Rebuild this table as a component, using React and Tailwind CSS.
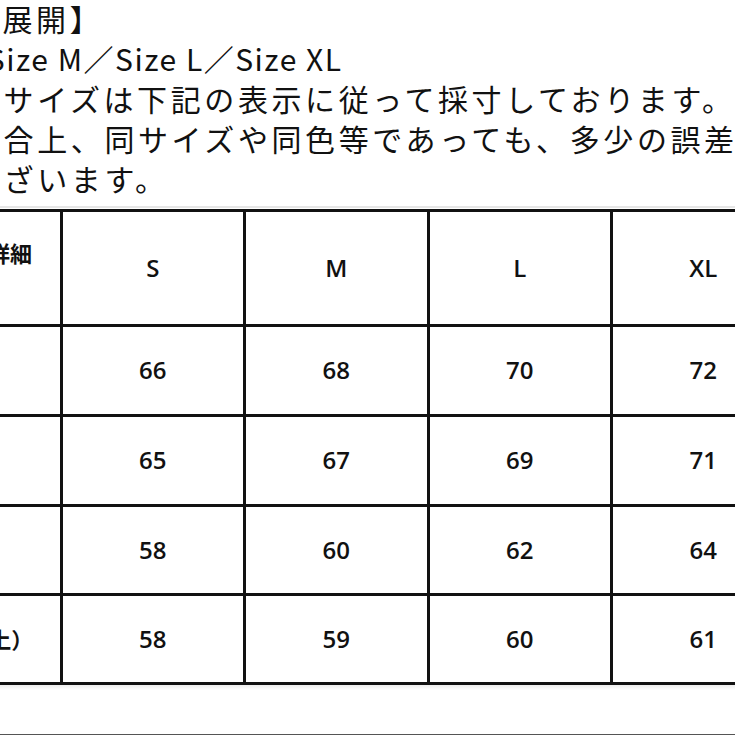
import React from 'react';

const jp = { fontFamily: '"Noto Sans CJK JP", "Noto Sans", sans-serif' };
const num = { fontFamily: '"Open Sans", "Noto Sans CJK JP", sans-serif' };

const sizes = ['S', 'M', 'L', 'XL'];
const rows = [
    { label: '着丈', values: [66, 68, 70, 72] },
    { label: '身幅', values: [65, 67, 69, 71] },
    { label: '肩幅', values: [58, 60, 62, 64] },
    { label: '袖丈（肩上）', values: [58, 59, 60, 61] },
];

const Cell = ({ children, className = '' }) => (
    <div className={`bg-white flex items-center justify-center text-[#111] ${className}`}>
        {children}
    </div>
);

export default function App() {
    return (
        <div className="w-[735px] h-[735px] overflow-hidden bg-white">
            <div className="mt-[-2px] text-[30px] leading-[40px] text-[#111] whitespace-nowrap" style={jp}>
                <div className="ml-[-131px] tracking-[3.6px]">【サイズ展開】</div>
                <div className="ml-[-135px] tracking-[1.5px]">Size S／Size M／Size L／Size XL</div>
                <div className="ml-[-30px] tracking-[3.6px]">※サイズは下記の表示に従って採寸しております。</div>
                <div className="ml-[-30px] tracking-[3.6px]">都合上、同サイズや同色等であっても、多少の誤差が</div>
                <div className="ml-[-30px] tracking-[3.6px]">ございます。</div>
            </div>

            <div className="mt-[8px] h-[2px] bg-[#e6e6e6]" />

            <div className="mt-[1px] ml-[-124px] w-max grid grid-cols-[repeat(5,180.5px)] grid-rows-[111.5px_87px_87px_86px_86px] gap-[3px] p-[3px] bg-[#111]">
                <Cell className="font-bold text-[22px] leading-[32px] pb-[32px] pl-[16px]">
                    <span style={jp}>サイズ詳細</span>
                </Cell>
                {sizes.map((s) => (
                    <Cell key={s} className="font-semibold text-[24px]">
                        <span style={num}>{s}</span>
                    </Cell>
                ))}
                {rows.map((row) => (
                    <React.Fragment key={row.label}>
                        <Cell className="font-bold text-[22px] pr-[4px]">
                            <span style={jp}>{row.label}</span>
                        </Cell>
                        {row.values.map((v, i) => (
                            <Cell key={i} className="font-semibold text-[24px]">
                                <span style={num}>{v}</span>
                            </Cell>
                        ))}
                    </React.Fragment>
                ))}
            </div>

            <div className="h-[5px] bg-gradient-to-b from-[#ececec] to-white" />
            <div className="mt-[44px] h-[2px] bg-[#555]" />
        </div>
    );
}
